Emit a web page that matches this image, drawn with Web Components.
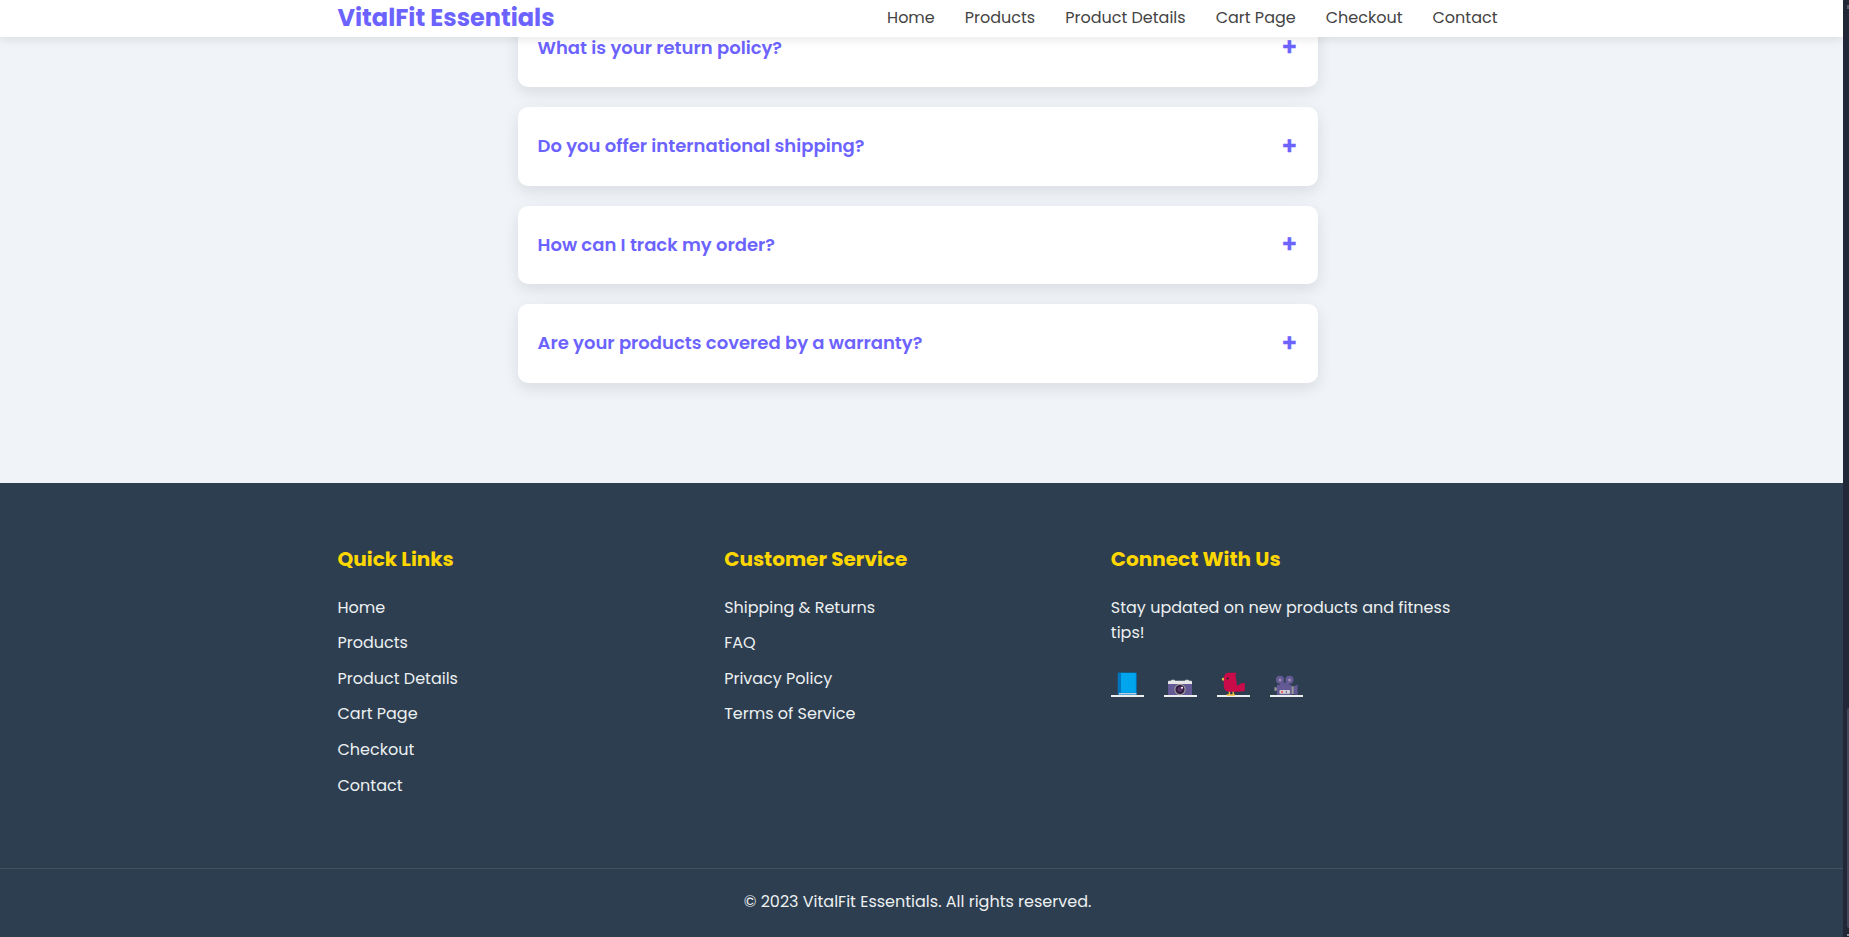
<!DOCTYPE html>
<html lang="en">
<head>
<meta charset="utf-8">
<title>VitalFit Essentials</title>
<style>
body{margin:0;height:937px;overflow:hidden;background:#232838;font-family:Poppins,Inter,"Open Sans",sans-serif;font-size:16px;line-height:25.6px}
</style>
</head>
<body>
<vf-app></vf-app>
<script>
const define=(name,html)=>{
  const t=document.createElement('template');t.innerHTML=html;
  customElements.define(name,class extends HTMLElement{
    constructor(){super();this.attachShadow({mode:'open'}).append(t.content.cloneNode(true))}
  });
};

define('vf-link','<style>:host{display:block;white-space:nowrap}</style><slot></slot>');

define('vf-header',`<style>
:host{display:block;position:absolute;top:0;left:0;right:0;z-index:2;height:37px;background:#fff;box-shadow:0 2px 10px rgba(0,0,0,.1);padding-right:8px;box-sizing:border-box}
.in{width:1160px;height:35px;margin:0 auto;display:flex;justify-content:space-between;align-items:center}
.logo{color:#6c63ff;font-weight:700;font-size:24px;line-height:35px}
nav{display:flex;gap:30px;color:#444}
</style>
<div class="in"><div class="logo">VitalFit Essentials</div>
<nav><vf-link>Home</vf-link><vf-link>Products</vf-link><vf-link>Product Details</vf-link><vf-link>Cart Page</vf-link><vf-link>Checkout</vf-link><vf-link>Contact</vf-link></nav></div>`);

define('vf-question',`<style>
:host{display:flex;justify-content:space-between;align-items:center;height:78.6px;box-sizing:border-box;padding:.6px 20px 0;background:#fff;border-radius:10px;box-shadow:0 5px 15px rgba(0,0,0,.1);color:#6c63ff;font-size:18px;line-height:28.8px;font-weight:600}
.plus{font-size:24px;line-height:38px;font-weight:600;-webkit-text-stroke:.3px #6c63ff}
</style><span><slot></slot></span><span class="plus">+</span>`);

define('vf-faq',`<style>
:host{display:block;height:483px;box-sizing:border-box;padding:8.4px 8px 0 0;background:#f0f4f8}
.list{width:800px;margin:0 auto;display:flex;flex-direction:column;gap:20px}
</style><div class="list">
<vf-question>What is your return policy?</vf-question>
<vf-question>Do you offer international shipping?</vf-question>
<vf-question>How can I track my order?</vf-question>
<vf-question>Are your products covered by a warranty?</vf-question></div>`);

define('vf-column',`<style>
:host{display:block;color:#ecf0f1}
h3{margin:0 0 19.700px;font-size:20px;line-height:32px;font-weight:700;color:#ffd700}
.body{display:flex;flex-direction:column;align-items:flex-start;gap:10px}
</style><h3><slot name="title"></slot></h3><div class="body"><slot></slot></div>`);

define('vf-social',`<style>
:host{display:flex;gap:19.600px;margin-top:24.100px}
a{display:block;width:33.400px;height:27px;border-bottom:2px solid #ecf0f1;box-sizing:border-box}
svg{display:block;width:33px;height:27px;margin-left:-.5px;overflow:visible}
</style>
<a><svg viewBox="0 0 33 27"><path d="M9 2.500h16.800q1 0 1 1V25H9q-1.300 0-1.300-1.300V3.800Q7.700 2.500 9 2.500z" fill="#0074bd"/><path d="M11 3h14.800V22.800H11z" fill="#00a6ed"/><path d="M8.800 23.200h17.600v1.200h-17.600z" fill="#e6e6e6"/></svg></a>
<a><svg viewBox="0 0 33 27"><rect x="8" y="9.700" width="4" height="3" rx="1" fill="#d3d3d3"/><rect x="22" y="9.700" width="4" height="3" rx="1" fill="#d3d3d3"/><rect x="5" y="10.700" width="24" height="5" rx="1" fill="#e6e6e6"/><path d="M5 14h24v11H6q-1 0-1-1z" fill="#635994"/><circle cx="17" cy="19.500" r="5.700" fill="#9b9b9b"/><circle cx="17" cy="19.500" r="4.500" fill="#321b41"/><circle cx="17" cy="19.300" r="2.600" fill="#533566"/><circle cx="19" cy="17.700" r="1" fill="#fff"/></svg></a>
<a><svg viewBox="0 0 33 27"><path d="M8.700 7.300L5.800 8.600 6 10.200l3 .8z" fill="#f9c23c"/><path d="M13.400 21v4M17.200 21v4" stroke="#f9c23c" stroke-width="1.300"/><path d="M10.500 25H19" stroke="#f9c23c" stroke-width="1.400"/><path d="M8 7.500Q8 2.700 13 2.700H20.700Q18.900 4.100 19.600 6L21 15.800 25.500 13.200Q26 12.900 28.800 12.900V20.300Q28.800 21.300 27.800 21.300L20 21.800H13Q7.800 21.500 7.800 16V12z" fill="#ca0b4a"/><circle cx="11.700" cy="8.400" r="1" fill="#212121"/></svg></a>
<a><svg viewBox="0 0 33 27"><g fill="#635994"><circle cx="11" cy="9.800" r="4.100"/><circle cx="20.500" cy="9.800" r="4.100"/><path d="M11 12.500h9v3h-9z"/><rect x="7.800" y="14.700" width="15" height="10.300" rx="1.300"/><path d="M24.500 16.500L28.600 14.500V25L24.500 24z"/></g><circle cx="11" cy="9.900" r="1.500" fill="#9b8dad"/><circle cx="20.500" cy="9.900" r="1.500" fill="#9b8dad"/><path d="M5.500 17l2.300.8v2.800L5.500 21z" fill="#9b9b9b"/><rect x="22.600" y="16.300" width="2.100" height="7.800" fill="#9b9b9b"/><rect x="10.500" y="20" width="10.500" height="3.700" rx="1" fill="#d3d3d3"/><rect x="12" y="20.800" width="2" height="2.200" fill="#f8312f" opacity=".65"/><rect x="16.800" y="20.800" width="1" height="2.200" fill="#635994"/></svg></a>`);

define('vf-footer',`<style>
:host{display:flex;flex-direction:column;height:454px;background:#2d3e50;color:#ecf0f1}
.cols{flex:none;height:385px;box-sizing:border-box;padding:60px 8px 0 0}
.in{width:1160px;margin:0 auto;display:grid;grid-template-columns:repeat(3,1fr)}
.copy{border-top:1px solid #435160;flex:1;padding:20px 8px 0 0;text-align:center}
.para{width:346px}
</style>
<div class="cols"><div class="in">
<vf-column><span slot="title">Quick Links</span><vf-link>Home</vf-link><vf-link>Products</vf-link><vf-link>Product Details</vf-link><vf-link>Cart Page</vf-link><vf-link>Checkout</vf-link><vf-link>Contact</vf-link></vf-column>
<vf-column><span slot="title">Customer Service</span><vf-link>Shipping &amp; Returns</vf-link><vf-link>FAQ</vf-link><vf-link>Privacy Policy</vf-link><vf-link>Terms of Service</vf-link></vf-column>
<vf-column><span slot="title">Connect With Us</span><div class="para">Stay updated on new products and fitness tips!<vf-social></vf-social></div></vf-column>
</div></div>
<div class="copy">© 2023 VitalFit Essentials. All rights reserved.</div>`);

define('vf-scrollbar',`<style>
:host{display:flex;flex-direction:column;width:6px;height:937px;background:#232838;align-items:flex-end}
.arrow{width:2px;height:4px;margin-top:5px;background:#5c5f68}
.thumb{width:2px;height:220px;margin-top:699px;background:#474760;border-radius:2px 0 0 2px}
.down{width:2px;height:2px;margin-top:6px;background:#9a9a9f}
</style><div class="arrow"></div><div class="thumb"></div><div class="down"></div>`);

define('vf-app',`<style>
:host{display:flex;height:937px}
.page{position:relative;width:1843px;flex:none;overflow:hidden}
</style><div class="page"><vf-header></vf-header><vf-faq></vf-faq><vf-footer></vf-footer></div><vf-scrollbar></vf-scrollbar>`);
</script>
</body>
</html>
